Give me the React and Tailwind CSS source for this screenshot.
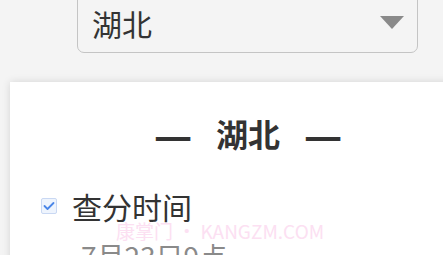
export default function App() {
  const font = { fontFamily: '"Noto Sans CJK SC", "Noto Sans", sans-serif' };
  return (
    <div className="w-[443px] h-[255px] overflow-hidden bg-[#f4f4f4] relative" style={font}>
      <div className="ml-[77px] w-[341px] -mt-[14px] pt-[14px] pb-[8px] border border-[#c4c4c4] rounded-[7px] bg-[#f4f4f4]">
        <div className="h-[43px] flex items-center justify-between pl-[14px] pr-[13px]">
          <span className="text-[30px] leading-none text-[#333333]">湖北</span>
          <svg width="24" height="13" viewBox="0 0 24 13" className="block">
            <polygon points="0,0 24,0 12,13" fill="#8a8a8a" />
          </svg>
        </div>
      </div>
      <div className="ml-[10px] mt-[29px] w-[476px] h-[200px] bg-white shadow-[0_0_8px_rgba(0,0,0,0.13)]">
        <div className="pt-[35px] flex justify-center items-center gap-[27px] text-[32px] leading-none font-bold text-[#333333]">
          <span className="inline-block w-[32px] text-center scale-x-[1.33] scale-y-[1.3]">—</span>
          <span className="w-[64px] text-center">湖北</span>
          <span className="inline-block w-[32px] text-center scale-x-[1.33] scale-y-[1.3]">—</span>
        </div>
        <div className="mt-[42px] pl-[31px] flex items-center gap-[15px]">
          <div className="w-[16px] h-[16px] rounded-[2px] border border-[#c9d8f3] bg-[#eef4fd] flex items-center justify-center">
            <svg width="12" height="10" viewBox="0 0 12 10">
              <polyline points="1.5,5 4.5,8 10.5,2" fill="none" stroke="#4a86e8" strokeWidth="1.8" strokeLinecap="round" strokeLinejoin="round" />
            </svg>
          </div>
          <span className="text-[30px] leading-none text-[#333333]">查分时间</span>
        </div>
        <div className="mt-[21px] pl-[71px] text-[28px] leading-none text-[#8a8a8a]">7月23日9点</div>
      </div>
      <div className="absolute left-[116px] top-[221px] text-[19px] leading-none text-[#fce0f2] whitespace-nowrap">
        康掌门 • KANGZM.COM
      </div>
    </div>
  );
}
